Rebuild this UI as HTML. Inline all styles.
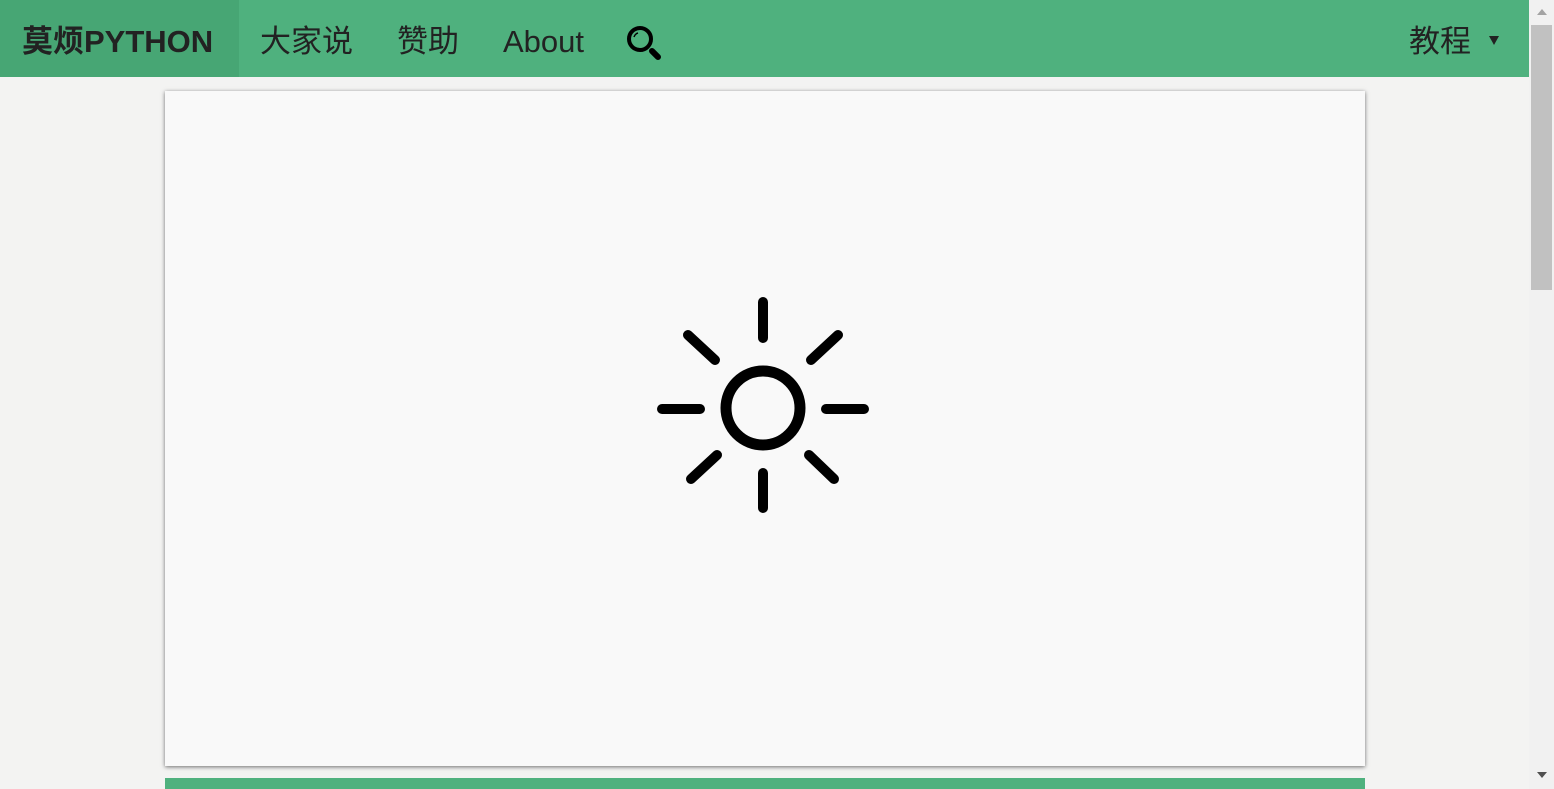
<!DOCTYPE html>
<html><head><meta charset="utf-8"><style>
html,body{margin:0;padding:0;}
body{width:1554px;height:789px;overflow:hidden;background:#f3f3f2;position:relative;font-family:"Liberation Sans","Noto Sans CJK SC",sans-serif;}
.nav{position:absolute;left:0;top:0;width:1529px;height:77px;background:#4fb17e;}
.brand{position:absolute;left:0;top:0;width:239px;height:77px;background:#47a674;}
.t{position:absolute;top:22px;font-size:31px;color:#222;line-height:40px;white-space:nowrap;}
.card{position:absolute;left:165px;top:91px;width:1200px;height:675px;background:#f9f9f9;box-shadow:0 1px 4px rgba(0,0,0,.55);}
.bar{position:absolute;left:165px;top:778px;width:1200px;height:11px;background:#4fb17e;}
.sb{position:absolute;left:1529px;top:0;width:25px;height:789px;background:#f1f1f1;}
.thumb{position:absolute;left:1531px;top:25px;width:21px;height:265px;background:#c1c1c1;}
</style></head><body>
<div class="nav">
<div class="brand"></div>
<div class="t" style="left:22px;font-weight:bold;">莫烦PYTHON</div>
<div class="t" style="left:260px;">大家说</div>
<div class="t" style="left:397px;">赞助</div>
<div class="t" style="left:503px;">About</div>
<svg style="position:absolute;left:620px;top:20px" width="50" height="45" viewBox="620 20 50 45">
<circle cx="640" cy="39" r="11" fill="none" stroke="#000" stroke-width="4"/>
<path d="M634 37 A6 6 0 0 1 638 33" fill="none" stroke="#000" stroke-width="1.5"/>
<line x1="652" y1="51" x2="658" y2="57" stroke="#000" stroke-width="6" stroke-linecap="round"/>
</svg>
<div class="t" style="left:1409px;">教程</div>
<div style="position:absolute;left:1489px;top:36px;width:0;height:0;border-left:5px solid transparent;border-right:5px solid transparent;border-top:9px solid #222;"></div>
</div>
<div class="card"></div>
<svg style="position:absolute;left:0;top:0" width="1554" height="789">
<g stroke="#000" stroke-width="10" stroke-linecap="round" fill="none">
<circle cx="763" cy="408" r="37" stroke-width="11"/>
<line x1="763" y1="302" x2="763" y2="338"/>
<line x1="763" y1="473" x2="763" y2="508"/>
<line x1="662" y1="409" x2="700" y2="409"/>
<line x1="826" y1="409" x2="864" y2="409"/>
<line x1="688" y1="335" x2="715" y2="360"/>
<line x1="838" y1="335" x2="811" y2="360"/>
<line x1="691" y1="479" x2="717" y2="455"/>
<line x1="834" y1="479" x2="809" y2="455"/>
</g></svg>
<div class="bar"></div>
<div class="sb"></div>
<div class="thumb"></div>
<div style="position:absolute;left:1537px;top:9px;width:0;height:0;border-left:5px solid transparent;border-right:5px solid transparent;border-bottom:6px solid #a3a3a3;"></div>
<div style="position:absolute;left:1537px;top:772px;width:0;height:0;border-left:5px solid transparent;border-right:5px solid transparent;border-top:6px solid #505050;"></div>
</body></html>
